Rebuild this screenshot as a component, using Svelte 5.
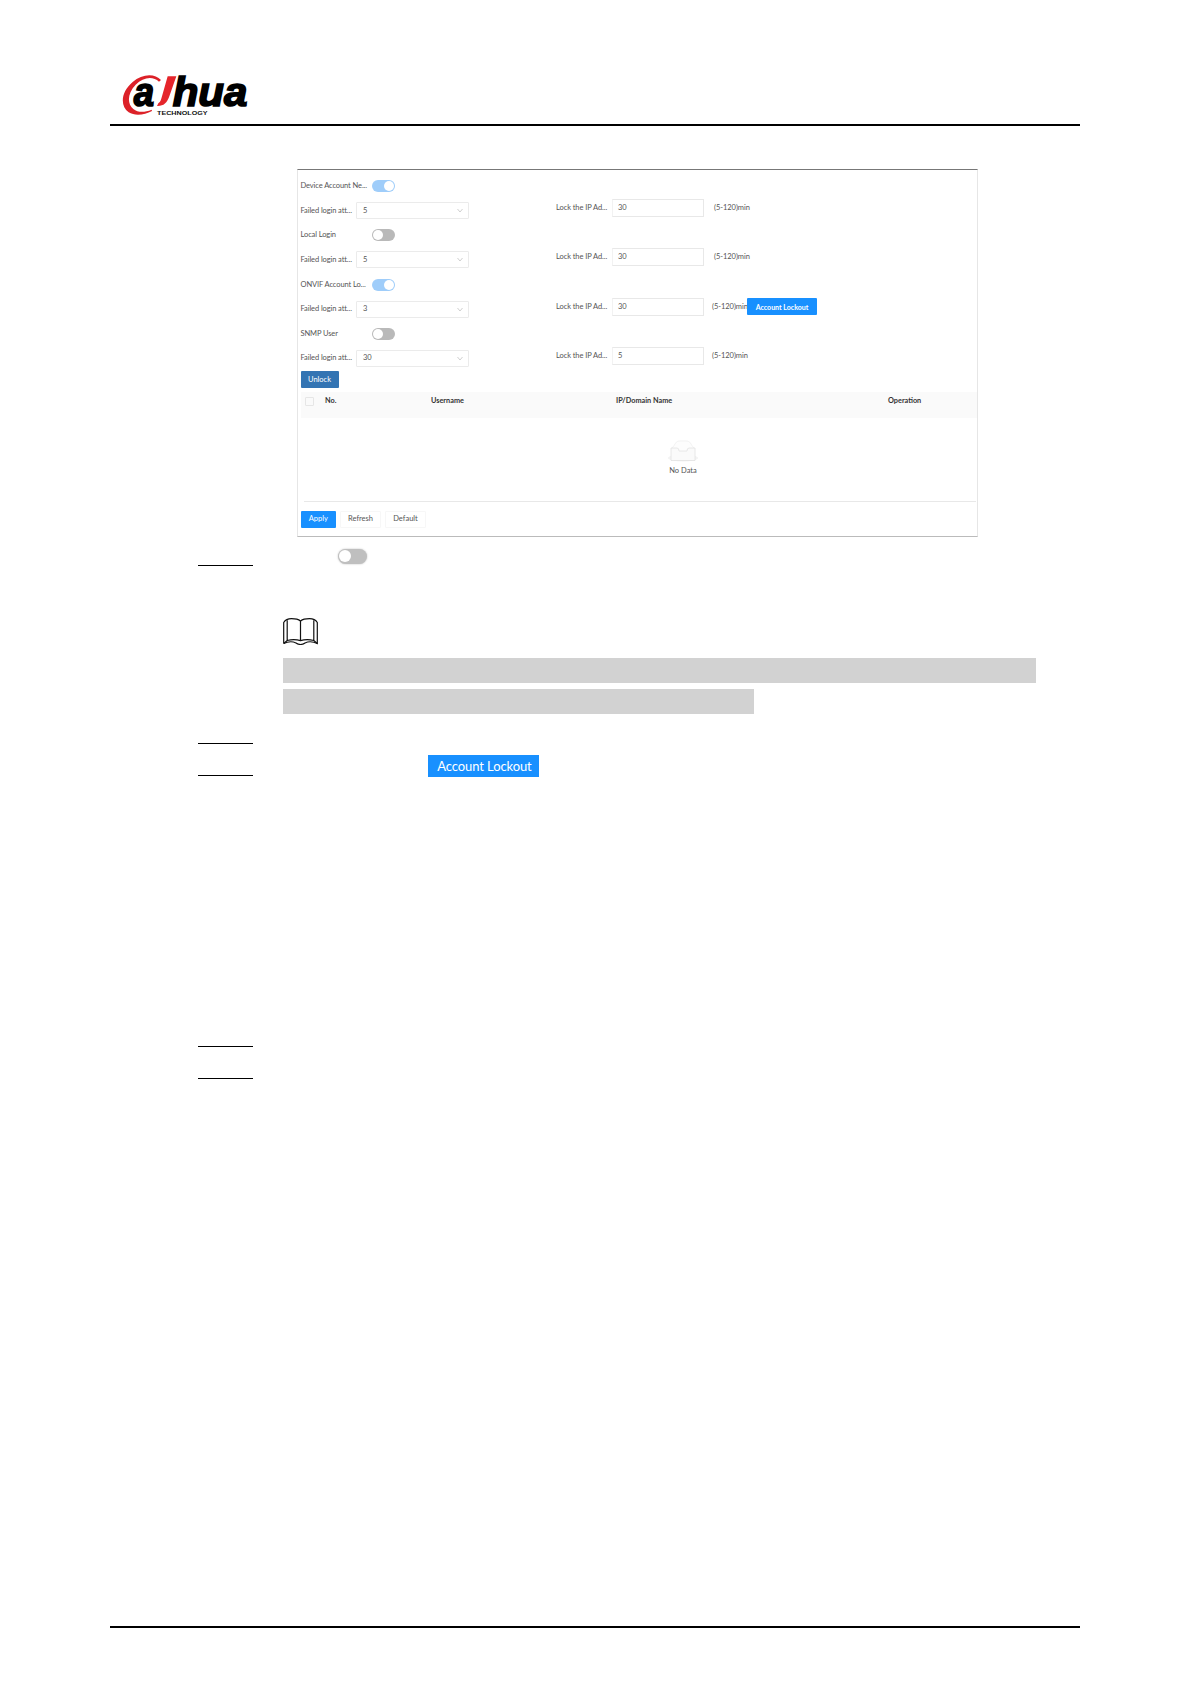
<script>
    const accounts = [
        { name: "Device Account Ne...", enabled: true, attempts: "5", lock: "30", lockout: false },
        { name: "Local Login", enabled: false, attempts: "5", lock: "30", lockout: false },
        { name: "ONVIF Account Lo...", enabled: true, attempts: "3", lock: "30", lockout: true },
        { name: "SNMP User", enabled: false, attempts: "30", lock: "5", lockout: false }
    ];

    const columns = ["No.", "Username", "IP/Domain Name", "Operation"];
</script>

<div class="page">
    <header class="page-header">
        <svg class="logo" viewBox="66 0 384 180" role="img" aria-label="Dahua Technology">
            <path d="M183 60 C164 39 126 41 98 66 C62 96 60 139 86 157 C105 169 134 165 156 153 L155 149 C133 158 114 158 100 147 C80 131 83 98 107 74 C130 51 159 48 177 65 Z" fill="#dc2128"/>
            <path d="M203 49 L229 49 L208 109 C201 130 190 139 171 138 L175 130 C182 126 183 119 186 109 Z" fill="#e5252b"/>
            <text class="logo-name" x="101" y="137" textLength="61" lengthAdjust="spacingAndGlyphs">a</text>
            <text class="logo-name" x="218" y="137" textLength="224" lengthAdjust="spacingAndGlyphs">hua</text>
            <text class="logo-sub" x="171" y="165" textLength="152" lengthAdjust="spacingAndGlyphs">TECHNOLOGY</text>
        </svg>
    </header>

    <main>
        <section class="panel">
            <div class="accounts">
                {#each accounts as account}
                    <div class="account">
                        <div class="left">
                            <div class="switch-row">
                                <span class="name">{account.name}</span>
                                <span class="switch" class:on={account.enabled}></span>
                            </div>
                            <div class="select-row">
                                <span class="label">Failed login att...</span>
                                <div class="select">
                                    <span>{account.attempts}</span>
                                    <svg viewBox="0 0 6 5"><path d="M0.5 1 L3 4 L5.5 1"/></svg>
                                </div>
                            </div>
                        </div>
                        <div class="right">
                            <span class="label">Lock the IP Ad...</span>
                            <div class="input">{account.lock}</div>
                            <span class="range">(5-120)min</span>
                            {#if account.lockout}
                                <button class="lockout">Account Lockout</button>
                            {/if}
                        </div>
                    </div>
                {/each}
            </div>

            <button class="unlock">Unlock</button>

            <div class="table-head">
                <span class="checkbox"></span>
                {#each columns as column}
                    <span>{column}</span>
                {/each}
            </div>
            <div class="empty">
                <svg viewBox="0 0 32 22">
                    <ellipse cx="16" cy="18" rx="15" ry="3.5" fill="#f3f3f3"/>
                    <path d="M5 8 C9 4 8 1 13 1 H19 C24 1 23 4 27 8 V20 H5 Z" fill="#fdfdfd" stroke="#ececec" stroke-width="0.7"/>
                    <path d="M4 8 H10 Q12 8 12 11 H20 Q20 8 22 8 H28 V20.5 H4 Z" fill="#fafafa" stroke="#e2e2e2" stroke-width="0.8"/>
                </svg>
                <span>No Data</span>
            </div>

            <div class="actions">
                <button class="apply">Apply</button>
                <button class="refresh">Refresh</button>
                <button class="default">Default</button>
            </div>
        </section>

        <div class="step first">
            <span class="toggle"></span>
        </div>

        <div class="note">
            <svg class="book" viewBox="0 0 35 27">
                <path d="M0.7 25.5 V4.5 Q3 0.7 8.5 0.7 Q14.5 0.7 17.5 3 Q20.5 0.7 26.5 0.7 Q32 0.7 34.3 4.5 V25.5 C30 23.5 25 23.5 22 25 Q20 26.5 17.5 26.5 Q15 26.5 13 25 C10 23.5 5 23.5 0.7 25.5"/>
                <path d="M4.2 2.3 V22.5 Q11 20.8 17.5 22.6 Q24 20.8 30.8 22.5 V2.3 M17.5 3 V22.6 M0.7 25.5 L4.2 22.5 M34.3 25.5 L30.8 22.5"/>
            </svg>
            <div class="highlight"></div>
            <div class="highlight short"></div>
        </div>

        <div class="step second"></div>
        <div class="step third">
            <span class="lockout-tag">Account Lockout</span>
        </div>
        <div class="step fourth"></div>
        <div class="step fifth"></div>
    </main>

    <footer></footer>
</div>

<style>
    :global(body){
        background-color: #fff;
    }

    .page, .page *{
        box-sizing: border-box;
    }

    .page{
        width: 1191px;
        height: 1684px;
        padding: 0 111px 56px 110px;
        display: flex;
        flex-direction: column;
        font-family: Lato, "Liberation Sans", sans-serif;
        font-size: 7.5px;
        line-height: 10px;
        color: #555;
    }

    .page-header{
        height: 126px;
        padding: 60px 0 0 12px;
        border-bottom: 2px solid #000;
        flex: none;
    }

    .logo{
        width: 128px;
        height: 60px;
        display: block;
    }

    .logo-name{
        font: italic 700 120px "Liberation Sans", sans-serif;
        fill: #000;
        stroke: #000;
        stroke-width: 5px;
    }

    .logo-sub{
        font: 700 17px "Liberation Sans", sans-serif;
        fill: #111;
    }

    main{
        flex: 1;
        padding-top: 43px;
    }

    /* settings panel */
    .panel{
        width: 681px;
        height: 368px;
        margin-left: 187px;
        padding: 4px 1px 0 2.5px;
        border: 1px solid #e6e6e6;
        border-top-color: #777;
        border-bottom-color: #bbb;
        display: flex;
        flex-direction: column;
        align-items: flex-start;
    }

    .account{
        height: 49.3px;
        display: flex;
    }

    .left{
        width: 255.5px;
    }

    .switch-row{
        height: 24px;
        display: flex;
        align-items: center;
    }

    .name{
        width: 71.5px;
        letter-spacing: -0.1px;
        white-space: nowrap;
    }

    .switch{
        width: 23px;
        height: 12px;
        padding: 1px;
        border-radius: 6px;
        background-color: #b9b9b9;
        display: flex;
    }

    .switch::before{
        content: "";
        width: 10px;
        height: 10px;
        border-radius: 50%;
        background-color: #fff;
    }

    .switch.on{
        background-color: #9fcdfa;
        justify-content: flex-end;
    }

    .select-row{
        height: 25px;
        display: flex;
        align-items: center;
    }

    .select-row .label{
        width: 55.5px;
        letter-spacing: -0.1px;
        white-space: nowrap;
    }

    .select{
        width: 113px;
        height: 17px;
        padding: 0 5px 0 6px;
        border: 1px solid #ebebeb;
        border-radius: 1px;
        display: flex;
        align-items: center;
        justify-content: space-between;
    }

    .select svg{
        width: 6px;
        height: 5px;
        fill: none;
        stroke: #bbb;
        stroke-width: 0.7;
    }

    .right{
        height: 18px;
        margin-top: 25px;
        display: flex;
        align-items: center;
    }

    .right .label{
        width: 56px;
        letter-spacing: -0.08px;
        white-space: nowrap;
    }

    .input{
        width: 92px;
        height: 18px;
        padding: 3px 5px;
        border: 1px solid #e8e8e8;
        border-left-color: #f2f2f2;
    }

    .range{
        margin-left: 10px;
        letter-spacing: -0.05px;
        white-space: nowrap;
    }

    .account:nth-child(n + 3) .range{
        width: 35px;
        margin-left: 8px;
    }

    button{
        height: 17px;
        padding: 0;
        border: none;
        border-radius: 1px;
        background-color: #1890ff;
        color: #fff;
        font: inherit;
        white-space: nowrap;
        flex: none;
    }

    button.lockout{
        width: 70px;
        font-weight: 700;
        font-size: 7px;
    }

    .unlock{
        width: 38px;
        background-color: #3374b3;
    }

    .table-head{
        width: 676px;
        height: 26px;
        margin-top: 4px;
        padding: 0 0 8px 4px;
        background-color: #fafafa;
        color: #333;
        font-weight: 700;
        font-size: 7.3px;
        display: grid;
        grid-template-columns: 20.5px 106px 185px 272px 1fr;
        align-items: center;
    }

    .checkbox{
        width: 9px;
        height: 9px;
        border: 1px solid #e6e6e6;
        border-radius: 1px;
    }

    .empty{
        width: 672px;
        height: 84px;
        margin-left: 3px;
        padding: 22px 0 0 87px;
        border-bottom: 1px solid #e8e8e8;
        display: flex;
        flex-direction: column;
        align-items: center;
        gap: 4px;
    }

    .empty svg{
        width: 32px;
        height: 22px;
    }

    .actions{
        margin-top: 8.5px;
        display: flex;
        gap: 4px;
    }

    .apply{
        width: 35.5px;
    }

    .refresh, .default{
        width: 41px;
        border: 1px solid #f7f7f7;
        background-color: #fff;
        color: #555;
    }

    /* numbered steps */
    .step{
        width: 55px;
        margin-left: 88px;
        border-bottom: 1px solid #000;
        display: flex;
    }

    .first{
        height: 29px;
        padding-top: 12px;
    }

    .toggle{
        width: 29px;
        height: 15px;
        margin-left: 140px;
        padding: 1px;
        border-radius: 8px;
        background-color: #bfbfbf;
        box-shadow: 0 0 2px #bbb;
        flex: none;
    }

    .toggle::before{
        content: "";
        width: 12px;
        height: 12px;
        border-radius: 50%;
        background-color: #fff;
        display: block;
    }

    .note{
        height: 148px;
        margin-left: 173px;
        padding-top: 52px;
    }

    .book{
        width: 35px;
        height: 27px;
        display: block;
        fill: none;
        stroke: #111;
        stroke-width: 1.2;
    }

    .highlight{
        width: 753px;
        height: 25px;
        margin-top: 13px;
        background-color: #d2d2d2;
    }

    .highlight.short{
        width: 471px;
        margin-top: 6px;
    }

    .second{
        height: 30px;
    }

    .third{
        height: 32px;
        padding-top: 11px;
    }

    .lockout-tag{
        width: 111px;
        height: 22px;
        margin-left: 230px;
        padding-left: 2px;
        background-color: #1890ff;
        color: #fff;
        font-size: 13px;
        line-height: 22px;
        letter-spacing: -0.1px;
        text-align: center;
        white-space: nowrap;
        flex: none;
    }

    .fourth{
        height: 271px;
    }

    .fifth{
        height: 32px;
    }

    footer{
        height: 2px;
        background-color: #000;
    }
</style>
